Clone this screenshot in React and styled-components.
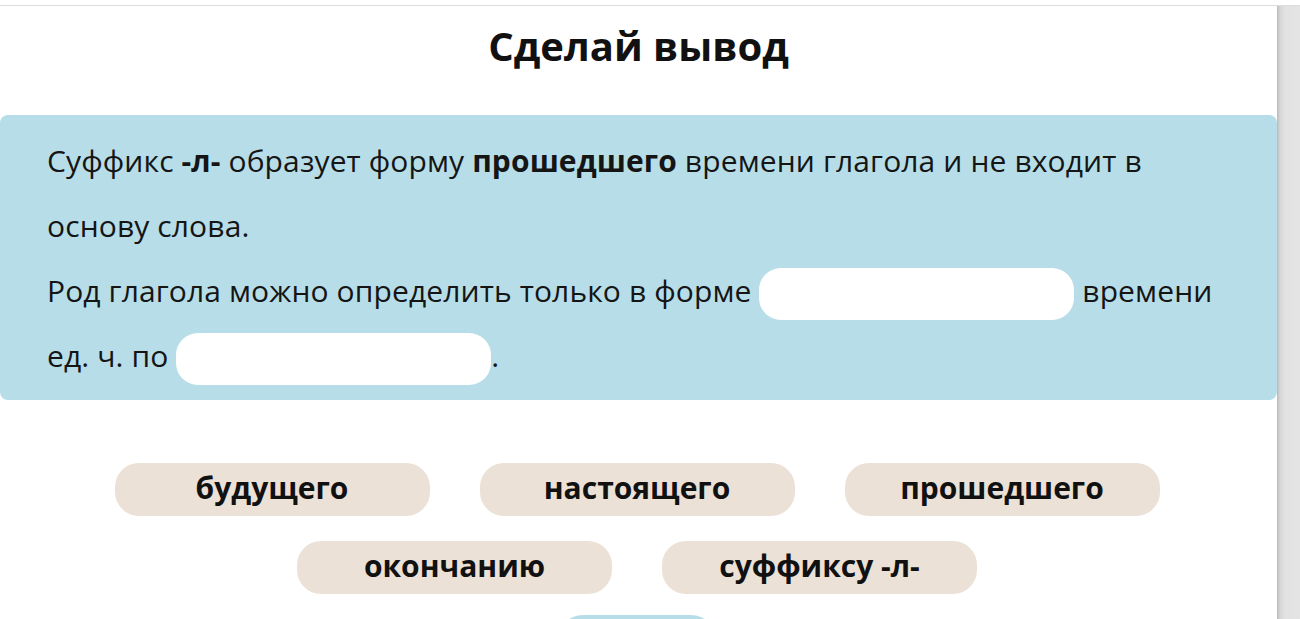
import React from "react";
import styled, { createGlobalStyle } from "styled-components";

const Global = createGlobalStyle`
  html, body { margin: 0; padding: 0; background: #ffffff; }
  body { font-family: "Open Sans", "Noto Sans", sans-serif; color: #111; overflow: hidden; }
`;

const Frame = styled.div`
  margin-top: 5px;
  border-top: 1px solid #dcdcdc;
  display: flex;
  height: 613px;
`;

const Main = styled.main`
  width: 1277px;
  flex: none;
`;

const Side = styled.aside`
  flex: 1;
  background: linear-gradient(to right, #b9b9b9 0px, #d6d6d6 3px, #e2e2e2 8px, #e4e4e4 100%);
`;

const Title = styled.h1`
  margin: 0;
  padding-top: 15px;
  font-size: 40px;
  line-height: 50px;
  font-weight: 700;
  text-align: center;
  color: #111;
`;

const Card = styled.section`
  margin-top: 44px;
  background: #b7dee8;
  border-radius: 8px;
  padding: 13px 47px 12px;
  font-size: 30px;
  line-height: 65px;
  letter-spacing: 0.12px;
  color: #151515;
`;

const Line = styled.p`
  margin: 0;
`;

const Blank = styled.span`
  display: inline-block;
  width: 315px;
  height: 52px;
  border-radius: 22px;
  background: #ffffff;
  vertical-align: middle;
`;

const Options = styled.div`
  display: flex;
  flex-direction: column;
  gap: 25px;
  margin-top: 63px;
  padding-right: 3px;
`;

const Row = styled.div`
  display: flex;
  justify-content: center;
  gap: 50px;
`;

const Chip = styled.button`
  width: 315px;
  height: 53px;
  border: none;
  border-radius: 24px;
  background: #ebe1d6;
  font-family: inherit;
  font-size: 30px;
  font-weight: 700;
  color: #111;
  padding: 0 0 5px;
  white-space: nowrap;
`;

const Actions = styled.div`
  display: flex;
  justify-content: center;
  margin-top: 21px;
  padding-right: 3px;
`;

const CheckButton = styled.button`
  width: 160px;
  height: 53px;
  border: none;
  border-radius: 26px;
  background: #b7dee8;
  font-family: inherit;
  font-size: 26px;
  font-weight: 700;
  color: #111;
  padding: 0;
`;

export default function App() {
  return (
    <>
      <Global />
      <Frame>
        <Main>
          <Title>Сделай вывод</Title>
          <Card>
            <Line>
              Суффикс <b>-л-</b> образует форму <b>прошедшего</b> времени глагола и не входит в основу слова.
            </Line>
            <Line>
              Род глагола можно определить только в форме <Blank /> времени ед. ч. по <Blank />.
            </Line>
          </Card>
          <Options>
            <Row>
              <Chip>будущего</Chip>
              <Chip>настоящего</Chip>
              <Chip>прошедшего</Chip>
            </Row>
            <Row>
              <Chip>окончанию</Chip>
              <Chip>суффиксу -л-</Chip>
            </Row>
          </Options>
          <Actions>
            <CheckButton>Проверить</CheckButton>
          </Actions>
        </Main>
        <Side />
      </Frame>
    </>
  );
}
